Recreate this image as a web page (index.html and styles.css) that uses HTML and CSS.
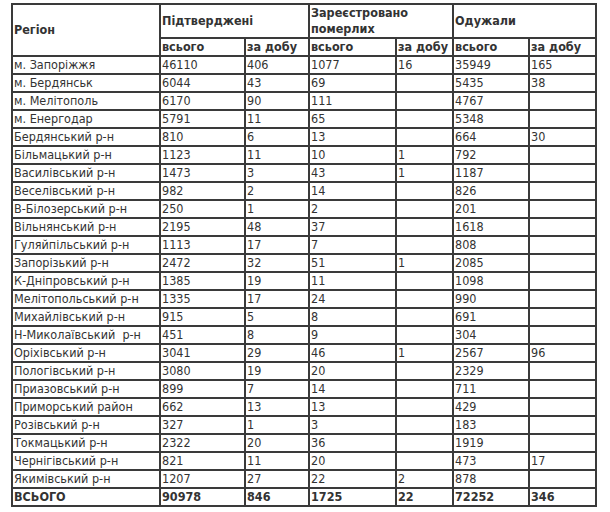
FILE: index.html
```html
<!DOCTYPE html>
<html lang="uk">
<head>
<meta charset="utf-8">
<link rel="stylesheet" href="styles.css">
</head>
<body>
<table class="stats">
<colgroup>
<col class="c-region"><col class="c1"><col class="c2"><col class="c3"><col class="c4"><col class="c5"><col class="c6">
</colgroup>
<thead>
<tr class="h1">
<th rowspan="2">Регіон</th>
<th colspan="2">Підтверджені</th>
<th colspan="2">Зареєстровано померлих</th>
<th colspan="2">Одужали</th>
</tr>
<tr class="h2">
<th>всього</th><th>за добу</th><th>всього</th><th>за добу</th><th>всього</th><th>за добу</th>
</tr>
</thead>
<tbody>
<tr><td>м. Запоріжжя</td><td>46110</td><td>406</td><td>1077</td><td>16</td><td>35949</td><td>165</td></tr>
<tr><td>м. Бердянськ</td><td>6044</td><td>43</td><td>69</td><td></td><td>5435</td><td>38</td></tr>
<tr><td>м. Мелітополь</td><td>6170</td><td>90</td><td>111</td><td></td><td>4767</td><td></td></tr>
<tr><td>м. Енергодар</td><td>5791</td><td>11</td><td>65</td><td></td><td>5348</td><td></td></tr>
<tr><td>Бердянський р-н</td><td>810</td><td>6</td><td>13</td><td></td><td>664</td><td>30</td></tr>
<tr><td>Більмацький р-н</td><td>1123</td><td>11</td><td>10</td><td>1</td><td>792</td><td></td></tr>
<tr><td>Василівський р-н</td><td>1473</td><td>3</td><td>43</td><td>1</td><td>1187</td><td></td></tr>
<tr><td>Веселівський р-н</td><td>982</td><td>2</td><td>14</td><td></td><td>826</td><td></td></tr>
<tr><td>В-Білозерський р-н</td><td>250</td><td>1</td><td>2</td><td></td><td>201</td><td></td></tr>
<tr><td>Вільнянський р-н</td><td>2195</td><td>48</td><td>37</td><td></td><td>1618</td><td></td></tr>
<tr><td>Гуляйпільський р-н</td><td>1113</td><td>17</td><td>7</td><td></td><td>808</td><td></td></tr>
<tr><td>Запорізький р-н</td><td>2472</td><td>32</td><td>51</td><td>1</td><td>2085</td><td></td></tr>
<tr><td>К-Дніпровський р-н</td><td>1385</td><td>19</td><td>11</td><td></td><td>1098</td><td></td></tr>
<tr><td>Мелітопольський р-н</td><td>1335</td><td>17</td><td>24</td><td></td><td>990</td><td></td></tr>
<tr><td>Михайлівський р-н</td><td>915</td><td>5</td><td>8</td><td></td><td>691</td><td></td></tr>
<tr><td>Н-Миколаївський&nbsp; р-н</td><td>451</td><td>8</td><td>9</td><td></td><td>304</td><td></td></tr>
<tr><td>Оріхівський р-н</td><td>3041</td><td>29</td><td>46</td><td>1</td><td>2567</td><td>96</td></tr>
<tr><td>Пологівський р-н</td><td>3080</td><td>19</td><td>20</td><td></td><td>2329</td><td></td></tr>
<tr><td>Приазовський р-н</td><td>899</td><td>7</td><td>14</td><td></td><td>711</td><td></td></tr>
<tr><td>Приморський район</td><td>662</td><td>13</td><td>13</td><td></td><td>429</td><td></td></tr>
<tr><td>Розівський р-н</td><td>327</td><td>1</td><td>3</td><td></td><td>183</td><td></td></tr>
<tr><td>Токмацький р-н</td><td>2322</td><td>20</td><td>36</td><td></td><td>1919</td><td></td></tr>
<tr><td>Чернігівський р-н</td><td>821</td><td>11</td><td>20</td><td></td><td>473</td><td>17</td></tr>
<tr><td>Якимівський р-н</td><td>1207</td><td>27</td><td>22</td><td>2</td><td>878</td><td></td></tr>
<tr class="total"><td>ВСЬОГО</td><td>90978</td><td>846</td><td>1725</td><td>22</td><td>72252</td><td>346</td></tr>
</tbody>
</table>
</body>
</html>
```
FILE: styles.css
```css
html, body {
  margin: 0;
  padding: 0;
  background: #fff;
}

body {
  font-family: "DejaVu Sans Condensed", "DejaVu Sans", Verdana, sans-serif;
  font-size: 12.5px;
  color: #333;
}

.stats {
  margin: 3px 0 0 11px;
  width: 586px;
  table-layout: fixed;
  border-collapse: separate;
  border-spacing: 0;
  border: 1px solid #3a3a3a;
}

.c-region { width: 148px; }
.c1 { width: 85px; }
.c2 { width: 64px; }
.c3 { width: 87px; }
.c4 { width: 57px; }
.c5 { width: 76px; }
.c6 { width: 67px; }

.stats th,
.stats td {
  border: 1px solid #3a3a3a;
  padding: 0 1px;
  line-height: 16px;
  height: 16px;
  text-align: left;
  vertical-align: middle;
  white-space: nowrap;
  overflow: hidden;
}

.stats th {
  font-weight: bold;
}

.stats .h1 th {
  white-space: normal;
  line-height: 16px;
}

.stats .total td {
  font-weight: bold;
}
```
